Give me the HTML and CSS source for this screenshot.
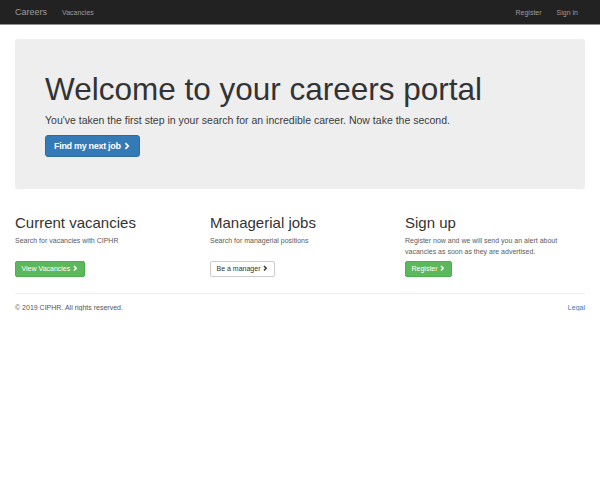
FILE: index.html
```html
<!DOCTYPE html>
<html>
<head>
<meta charset="utf-8">
<link rel="stylesheet" href="styles.css">
</head>
<body>
<nav class="navbar">
  <div class="nav-left">
    <a class="brand">Careers</a>
    <a class="nav-link">Vacancies</a>
  </div>
  <div class="nav-right">
    <a class="nav-link">Register</a>
    <a class="nav-link">Sign in</a>
  </div>
</nav>
<main class="container">
  <section class="jumbotron">
    <h1>Welcome to your careers portal</h1>
    <p class="lead">You've taken the first step in your search for an incredible career. Now take the second.</p>
    <a class="btn btn-lg btn-primary">Find my next job <svg class="chev" viewBox="0 0 10 10"><polyline points="3,1.5 6.5,5 3,8.5"/></svg></a>
  </section>
  <section class="cols">
    <div class="col">
      <h2>Current vacancies</h2>
      <p class="desc">Search for vacancies with CIPHR</p>
      <a class="btn btn-sm btn-success">View Vacancies <svg class="chev" viewBox="0 0 10 10"><polyline points="3,1.5 6.5,5 3,8.5"/></svg></a>
    </div>
    <div class="col">
      <h2>Managerial jobs</h2>
      <p class="desc">Search for managerial positions</p>
      <a class="btn btn-sm btn-default">Be a manager <svg class="chev" viewBox="0 0 10 10"><polyline points="3,1.5 6.5,5 3,8.5"/></svg></a>
    </div>
    <div class="col">
      <h2>Sign up</h2>
      <p class="desc">Register now and we will send you an alert about vacancies as soon as they are advertised.</p>
      <a class="btn btn-sm btn-success">Register <svg class="chev" viewBox="0 0 10 10"><polyline points="3,1.5 6.5,5 3,8.5"/></svg></a>
    </div>
  </section>
  <hr class="rule">
  <footer class="footer">
    <span>&copy; 2019 CIPHR. All rights reserved.</span>
    <a class="legal">Legal</a>
  </footer>
</main>
</body>
</html>
```
FILE: styles.css
```css
html, body {
  margin: 0;
  padding: 0;
  background: #fff;
  font-family: "Liberation Sans", Arial, sans-serif;
  color: #333;
}
a { text-decoration: none; }

.navbar {
  height: 24px;
  background: #222;
  border-bottom: 1px solid #8e8e8e;
  display: flex;
  justify-content: space-between;
  align-items: center;
  padding: 0 14.5px 0 15px;
}
.nav-left, .nav-right {
  display: flex;
  align-items: center;
}
.brand {
  color: #9d9d9d;
  font-size: 9px;
  padding-right: 7.5px;
}
.nav-link {
  color: #9d9d9d;
  font-size: 7px;
  padding: 0 7.5px;
}

.container {
  padding: 0 15px;
}

.jumbotron {
  margin-top: 14px;
  background: #eee;
  border-radius: 3px;
  height: 150px;
  box-sizing: border-box;
  padding: 33px 30px 0;
}
.jumbotron h1 {
  margin: 0;
  font-size: 31.5px;
  font-weight: normal;
  line-height: 35px;
  color: #333;
}
.lead {
  margin: 6px 0 7px;
  font-size: 10.5px;
  line-height: 15px;
  color: #3a3a3a;
}
.btn {
  display: inline-flex;
  align-items: center;
  box-sizing: border-box;
  border: 1px solid transparent;
  white-space: nowrap;
}
.btn-lg {
  height: 22px;
  padding: 0 8px 0 8px;
  font-size: 9px;
  font-weight: bold;
  letter-spacing: -0.3px;
  border-radius: 3px;
}
.btn-primary {
  background: #337ab7;
  border-color: #2e6da4;
  color: #fff;
}
.chev {
  width: 8px;
  height: 8px;
  margin-left: 2px;
  fill: none;
  stroke: currentColor;
  stroke-width: 2.2;
}
.btn-sm .chev {
  width: 6.5px;
  height: 6.5px;
  margin-left: 1.5px;
}

.cols {
  display: grid;
  grid-template-columns: 195px 195px 1fr;
  margin-top: 25px;
}
.col h2 {
  margin: 0;
  font-size: 15px;
  font-weight: normal;
  line-height: 17px;
  color: #333;
}
.desc {
  margin: 5px 0 0;
  font-size: 7px;
  line-height: 10.5px;
  color: #5a5a5a;
  min-height: 21px;
  padding-right: 20px;
  box-sizing: border-box;
}
.btn-sm {
  height: 16px;
  padding: 0 5.5px;
  font-size: 7px;
  border-radius: 2px;
}
.col .btn { margin-top: 0; }
.btn-success {
  background: #5cb85c;
  border-color: #4cae4c;
  color: #fff;
}
.btn-default {
  background: #fff;
  border-color: #ccc;
  color: #333;
}

.rule {
  border: 0;
  border-top: 1px solid #eee;
  margin: 16px 0 0;
}
.footer {
  display: flex;
  justify-content: space-between;
  font-size: 7px;
  color: #555;
  margin-top: 10px;
}
.legal { color: #337ab7; }
```
